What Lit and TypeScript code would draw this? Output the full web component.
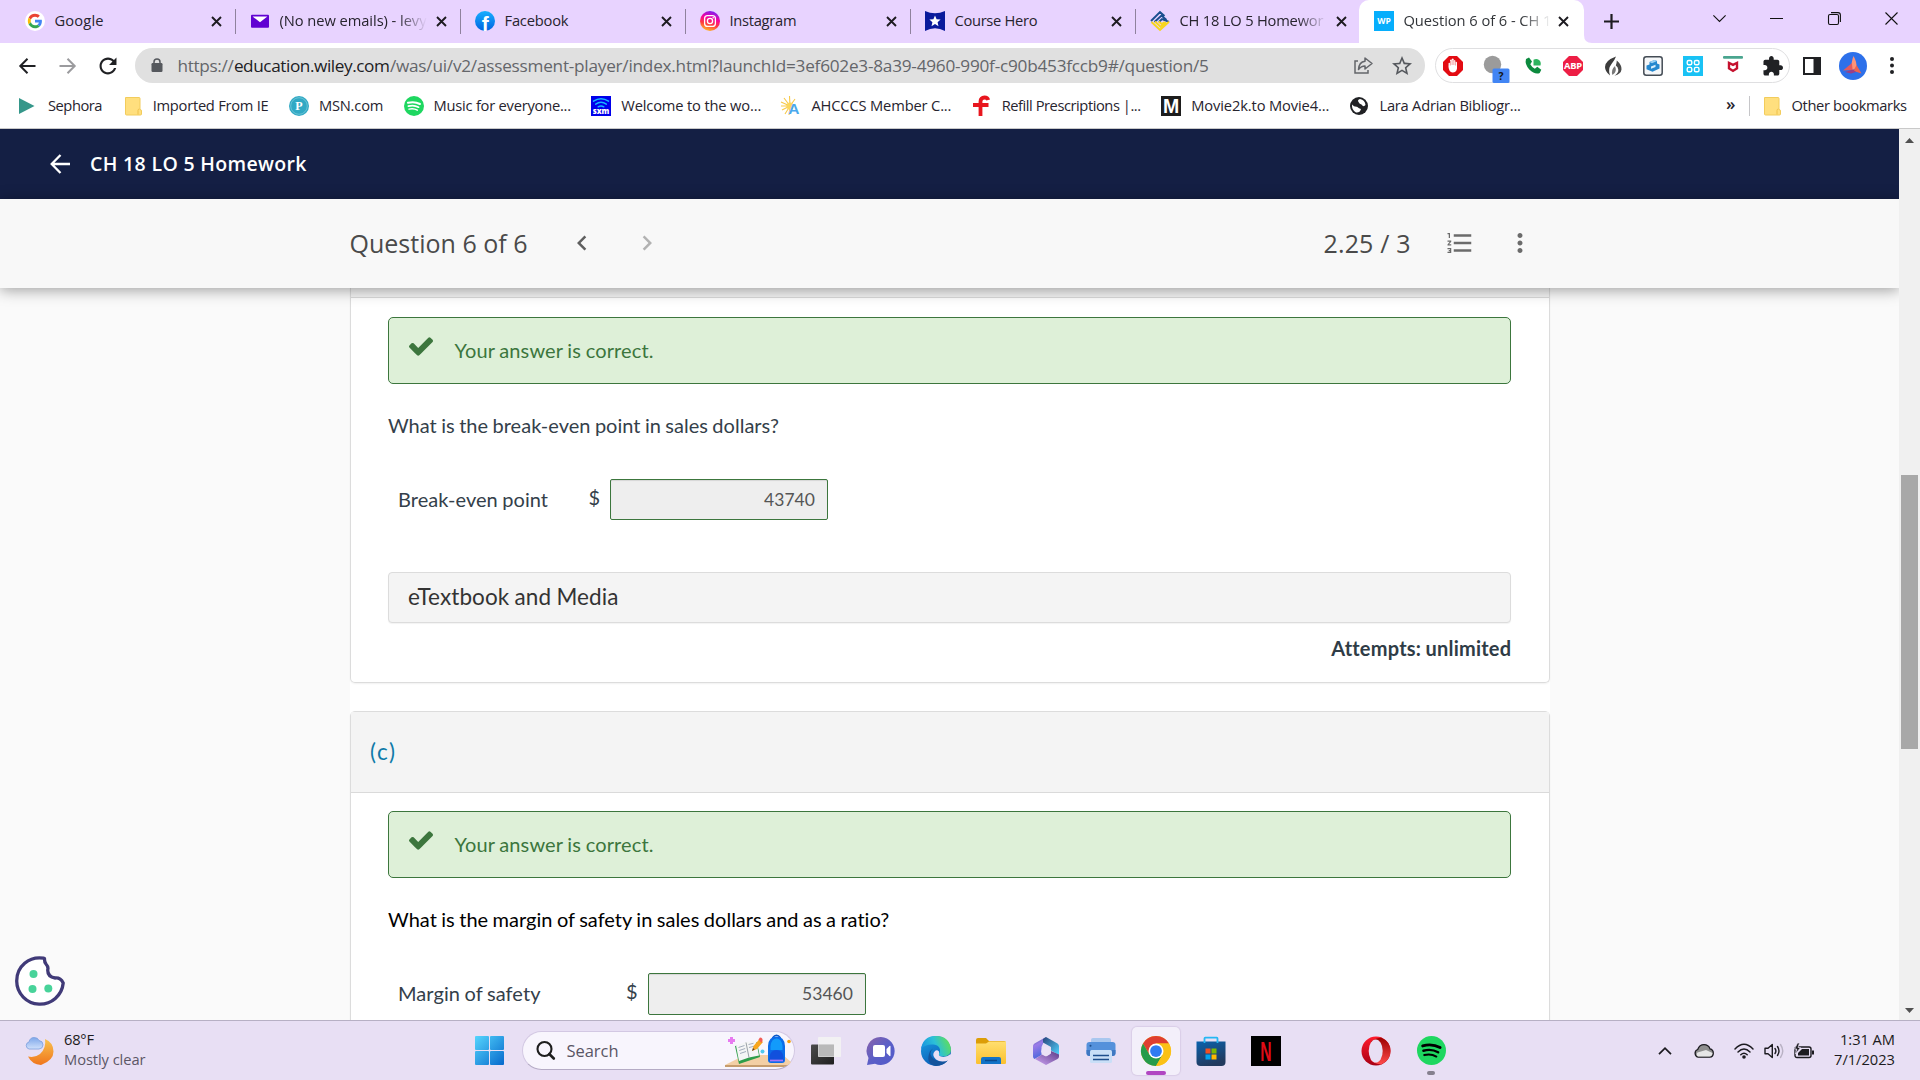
import { LitElement, html, css, svg } from "lit";
import { customElement, property } from "lit/decorators.js";

/* Text run that spreads its letters over a given advance width. */
@customElement("fit-text")
class FitText extends LitElement {
  @property({ type: Number }) w = 0;
  static styles = css`
    :host { display: inline-block; white-space: pre; flex: none; }
  `;
  firstUpdated() {
    const n = (this.textContent || "").length;
    const natural = this.getBoundingClientRect().width;
    if (this.w && n > 1) {
      const ls = (this.w - natural) / (n - 1);
      this.style.letterSpacing = ls.toFixed(3) + "px";
      this.style.marginRight = (-ls).toFixed(3) + "px";
    }
  }
  render() { return html`<slot></slot>`; }
}

const ic = (w: number, h: number, vb: string, body: unknown) =>
  html`<svg class="ic" width=${w} height=${h} viewBox=${vb}>${body}</svg>`;
const fit = (t: string, w: number) => html`<fit-text w=${w}>${t}</fit-text>`;

const google = ic(20, 20, "0 0 20 20", svg`<circle cx="10" cy="10" r="10" fill="#fff"/>
  <g transform="translate(2.8 2.8) scale(.3)">
  <path fill="#EA4335" d="M24 9.5c3.54 0 6.71 1.22 9.21 3.6l6.85-6.85C35.9 2.38 30.47 0 24 0 14.62 0 6.51 5.38 2.56 13.22l7.98 6.19C12.43 13.72 17.74 9.5 24 9.5z"/>
  <path fill="#4285F4" d="M46.98 24.55c0-1.57-.15-3.09-.38-4.55H24v9.02h12.94c-.58 2.96-2.26 5.48-4.78 7.18l7.73 6c4.51-4.18 7.09-10.36 7.09-17.65z"/>
  <path fill="#FBBC05" d="M10.53 28.59c-.48-1.45-.76-2.99-.76-4.59s.27-3.14.76-4.59l-7.98-6.19C.92 16.46 0 20.12 0 24s.92 7.54 2.56 10.78l7.97-6.19z"/>
  <path fill="#34A853" d="M24 48c6.48 0 11.93-2.13 15.89-5.81l-7.73-6c-2.15 1.45-4.92 2.3-8.16 2.3-6.26 0-11.57-4.22-13.47-9.91l-7.98 6.19C6.51 42.62 14.62 48 24 48z"/></g>`);
const mail = ic(20, 20, "0 0 20 20", svg`<rect x="1" y="3.7" width="18" height="13" rx="1" fill="#6001d2"/><path d="M2.6 5.5l7.4 5.8 7.4-5.8z" fill="#fff"/>`);
const facebook = ic(20, 20, "0 0 20 20", svg`<defs><linearGradient id="fb" x1="0" y1="0" x2="0" y2="1"><stop offset="0" stop-color="#19afff"/><stop offset="1" stop-color="#0062e0"/></linearGradient></defs>
  <circle cx="10" cy="10" r="10" fill="url(#fb)"/><text x="6.7" y="19.6" font-family="Liberation Sans" font-weight="700" font-size="21" fill="#fff">f</text>`);
const instagram = ic(20, 20, "0 0 20 20", svg`<defs><linearGradient id="ig" x1=".3" y1="1" x2=".6" y2="0"><stop offset="0" stop-color="#ffc229"/><stop offset=".35" stop-color="#ff3a3e"/><stop offset=".65" stop-color="#f600a0"/><stop offset="1" stop-color="#7b21f5"/></linearGradient></defs>
  <circle cx="10" cy="10" r="10" fill="url(#ig)"/><g fill="none" stroke="#fff" stroke-width="1.3"><rect x="4.6" y="4.6" width="10.8" height="10.8" rx="3"/><circle cx="10" cy="10" r="2.6"/></g><circle cx="13.2" cy="6.8" r=".8" fill="#fff"/>`);
const courseHero = ic(20, 20, "0 0 20 20", svg`<path d="M0 0q5 2.300 10 2.300T20 0v20q-5-2.800-10-2.800T0 20z" fill="#0a1a9c"/>
  <path d="M10 4.600l1.600 3.700 4 .3-3 2.700.9 3.900-3.500-2.100-3.500 2.100.9-3.900-3-2.700 4-.3z" fill="#fff"/>`);
const wileyTab = ic(20, 20, "0 0 20 20", svg`<g fill="none" stroke-width="1.900"><path d="M1 10l9-9 4.500 4M4.500 11L11.500 4.500l5 4.500M9 11l3-3 7 2.800" stroke="#1b4f8f"/><path d="M1.500 11l8.500 8 9-8.300M5 10.500l5.500 5.300 5.500-4.500M8.700 10.500l3 2.500 3-2" stroke="#f7d51d"/></g>`);
const wpTab = ic(20, 20, "0 0 20 20", svg`<rect width="20" height="20" fill="#06aefc"/><text x="10" y="13" text-anchor="middle" font-family="Open Sans" font-weight="700" font-size="8.500" fill="#fff">WP</text>`);

const spotify = (s: number, ink: string) => ic(s, s, "0 0 24 24", svg`<circle cx="12" cy="12" r="12" fill="#1ed760"/><g fill="none" stroke=${ink} stroke-linecap="round"><path d="M4.700 8.200q7.800-2.200 14.400 1.400" stroke-width="2.400"/><path d="M5.300 12.200q6.600-1.900 12.200 1.300" stroke-width="2"/><path d="M6 15.800q5.500-1.400 10 1.200" stroke-width="1.700"/></g>`);

const folderBm = ic(20, 20, "0 0 20 20", svg`<path d="M2.500 1.500h13.500q1 0 1 1v11q1.500 0 1.500 1.500v3q0 1-1 1H3.500q-1 0-1-1z" fill="#ffdf7e" stroke="#f2cc5c"/><path d="M15 18.500v-4q0-1.500 1.500-1.500" fill="none" stroke="#eec04a"/>`);

const TABS = [
  { icon: google, t: "Google", w: 49 },
  { icon: mail, t: "(No new emails) - levy", w: 147, fade: true },
  { icon: facebook, t: "Facebook", w: 64 },
  { icon: instagram, t: "Instagram", w: 67 },
  { icon: courseHero, t: "Course Hero", w: 83 },
  { icon: wileyTab, t: "CH 18 LO 5 Homewor", w: 144, fade: true },
  { icon: wpTab, t: "Question 6 of 6 - CH 1", w: 148, fade: true, active: true },
];

const BOOKMARKS = [
  { icon: ic(20, 20, "0 0 20 20", svg`<path d="M1 2l15.500 8L1 18z" fill="#35978a"/>`), t: "Sephora", w: 54.500 },
  { icon: folderBm, t: "Imported From IE", w: 116 },
  { icon: ic(20, 20, "0 0 20 20", svg`<circle cx="10" cy="10" r="10" fill="#31a9c4"/><circle cx="10" cy="10" r="8.300" fill="none" stroke="#8ed3e0" stroke-width=".6"/><text x="10" y="14" text-anchor="middle" font-family="Liberation Serif" font-weight="700" font-size="12" fill="#fff">P</text>`), t: "MSN.com", w: 64.500 },
  { icon: spotify(20, "#fff"), t: "Music for everyone...", w: 137.500 },
  { icon: ic(20, 20, "0 0 20 20", svg`<rect width="20" height="20" fill="#0000eb"/><g fill="none" stroke="#18b8ff" stroke-width="1.500" stroke-linecap="round"><path d="M2.500 5.200q7.500-5 15 0"/><path d="M4.700 8.100q5.300-3.500 10.600 0"/><path d="M7.200 10.800q2.800-1.800 5.600 0"/></g><text x="10" y="18" text-anchor="middle" font-family="Open Sans" font-weight="800" font-size="7.800" fill="#fff">sxm</text>`), t: "Welcome to the wo...", w: 140 },
  { icon: ic(20, 20, "0 0 20 20", svg`<g stroke="#f7c948" stroke-width="1.100"><path d="M9 10L0 6M9 10L3 2M9 10L8.500 0M9 10l5-7M9 10H0M9 10l-8 4M9 10l-5 8M9 10l-1 9"/></g><circle cx="9" cy="10" r="3.500" fill="#fbd65c"/><text x="12.800" y="18" text-anchor="middle" font-family="Liberation Sans" font-weight="700" font-size="15.500" fill="#4aa9ee">A</text>`), t: "AHCCCS Member C...", w: 140 },
  { icon: ic(20, 20, "0 0 20 20", svg`<path d="M8.500 20V5.500Q8.500 1.500 12.500 1.500q3 0 3.700 2.500M1 9h15.500" fill="none" stroke="#e8161e" stroke-width="3.800"/>`), t: "Refill Prescriptions |...", w: 139.500 },
  { icon: ic(20, 20, "0 0 20 20", svg`<rect width="20" height="20" fill="#1d1d1d"/><text x="10" y="17" text-anchor="middle" font-family="Liberation Sans" font-weight="700" font-size="19.500" fill="#fff">M</text>`), t: "Movie2k.to Movie4...", w: 138 },
  { icon: ic(20, 20, "0 0 20 20", svg`<circle cx="10" cy="10" r="9" fill="#202124"/><path d="M11 3q5 1 5.500 6-2 2.500-4-.500-2-.500-3-2.500Q8 4 11 3zM3 8.500q2 2.500 5 2.200 2 2 4 2.300-1 4-5 3.500Q2.500 14 3 8.500z" fill="#fff"/>`), t: "Lara Adrian Bibliogr...", w: 141.500 },
];

const EXTENSIONS = [
  ic(20, 20, "0 0 20 20", svg`<path d="M6 0h8l6 6v8l-6 6H6l-6-6V6z" fill="#e30b12"/><path d="M5.500 11l.1-4q1.200-.8 1.500.4V4q1.200-.9 1.700.2V3q1.300-1 1.900.2v1.200q1.200-.7 1.700.3V6q1.300-.600 1.600.400v6.100q-.500 4-4.500 4Q6 16 5.500 11z" fill="#fff"/><path d="M7.300 5v4.500M9.100 4v5M10.900 4v5M12.600 5.500V9.500" stroke="#e30b12" stroke-width=".4"/>`),
  ic(34, 35, "0 0 34 35", svg`<circle cx="16.500" cy="16.500" r="8.700" fill="#9b9b9b"/><rect x="16.500" y="20.500" width="17" height="14.500" rx="1.500" fill="#4285f4"/><text x="25" y="32" text-anchor="middle" font-family="Open Sans" font-weight="700" font-size="10.500" fill="#151515">?</text>`),
  ic(20, 20, "0 0 20 20", svg`<path d="M3 3l3-1.500 3 4L7.300 8.200q1.500 3 4.500 4.500l2.500-2 4 3-1.600 3.300Q12 19 6.300 13.500 1.500 8 3 3z" fill="#0c8a3e"/><path d="M10.500 9.500V3.800q3-1.800 5.500.2 2.500 2 1.500 5.500z" fill="#2eb45f"/>`),
  ic(20, 20, "0 0 20 20", svg`<path d="M6 0h8l6 6v8l-6 6H6l-6-6V6z" fill="#ed1e45"/><text x="10" y="13.300" text-anchor="middle" font-family="Open Sans" font-weight="700" font-size="9.300" textLength="18" fill="#fff">ABP</text>`),
  ic(20, 20, "0 0 20 20", svg`<path d="M13 .5Q2 4.500 2 11q0 4.500 5 8.500Q4.500 13 8.500 8 11.500 4.500 13 .5z" fill="#3c3c3c"/><path d="M13.800 4.500Q19 9 18.500 13.500 18 18 11.500 19.800q4.300-2.800 3.800-6-.3-3-2.500-4.300.9-2 1-5z" fill="#4a4a4a"/><path d="M12 10q-4.500 4-2.500 9Q14.500 16 12 10z" fill="#777"/>`),
  ic(20, 20, "0 0 20 20", svg`<rect x=".8" y=".8" width="18.400" height="18.400" rx="2.500" fill="#f5f7f9" stroke="#444c55" stroke-width="1.500"/><path d="M3.500 9.500l3-1V6l5-2 2.500 1v2.500l2.500 1v4l-7 3.300-6-2.500z" fill="#2488cf"/><path d="M6.500 6l5-2 2.500 1-5 2.200z" fill="#9bd2f5"/><path d="M8 10.500l4.500-1.800V11L8 12.800z" fill="#d9effc"/>`),
  ic(20, 20, "0 0 20 20", svg`<rect width="20" height="20" fill="#19c2f5"/><g fill="none" stroke="#fff" stroke-width="1.400"><rect x="4.200" y="4.500" width="4.600" height="4.300" rx="1.500"/><rect x="11.400" y="4.500" width="4.600" height="4.300" rx="1.500"/><rect x="4.200" y="11.400" width="4.600" height="4.300" rx="1.500"/><rect x="11.400" y="11.400" width="4.600" height="4.300" rx="1.500"/></g>`),
  ic(20, 20, "0 0 20 20", svg`<rect width="20" height="2.800" rx="1" fill="#4aa58f"/><path d="M4.800 5L10 7.500 15.200 5v8L10 16.200 4.800 13z" fill="#c5112e"/><path d="M7.200 8.800L10 10.200l2.800-1.400v2.900L10 13.400l-2.800-1.700z" fill="#fff"/>`),
  ic(20, 20, "1.500 1 21.500 21.500", svg`<path fill="#202124" d="M20.500 11H19V7c0-1.100-.9-2-2-2h-4V3.500C13 2.120 11.880 1 10.500 1S8 2.120 8 3.500V5H4c-1.100 0-1.990.9-1.990 2v3.800H3.500c1.490 0 2.700 1.210 2.700 2.700s-1.210 2.700-2.700 2.700H2V20c0 1.100.9 2 2 2h3.800v-1.500c0-1.490 1.210-2.700 2.700-2.700 1.490 0 2.700 1.210 2.700 2.700V22H17c1.100 0 2-.9 2-2v-4h1.500c1.380 0 2.500-1.120 2.500-2.500S21.880 11 20.500 11z"/>`),
];

const winLogo = ic(29, 29, "0 0 29 29", svg`<defs><linearGradient id="wl" gradientUnits="userSpaceOnUse" x1="0" y1="0" x2="29" y2="29"><stop offset="0" stop-color="#55d5fd"/><stop offset="1" stop-color="#0669cc"/></linearGradient></defs><g fill="url(#wl)"><rect width="14" height="14" rx="1"/><rect x="15" width="14" height="14" rx="1"/><rect y="15" width="14" height="14" rx="1"/><rect x="15" y="15" width="14" height="14" rx="1"/></g>`);

const searchArt = ic(66, 34, "0 0 66 34", svg`<path d="M0 31L20 21h38l8 7q-1 2-3 3z" fill="#f3cfa5"/><path d="M0 31h63l-4 2H0z" fill="#c69c6d"/>
  <path d="M10 12l22-4 3 15-21 7z" fill="#2e9e4a"/><path d="M11 11.500l10-3.500 10-1.500 3 15L24 23.500 14 27z" fill="#f5f5f5"/><path d="M21 8.500l3 15" stroke="#9aa0a6"/><path d="M13.500 13.500l6-2M14.200 16.500l6-2M15 19.500l6-2M23.500 10.500l5-1.200M24 13.500l5-1.200" stroke="#9aa4b5" stroke-width=".9"/>
  <path d="M27 17l1.500-5 6-7 3.500 3-6 7z" fill="#f8a61c"/><path d="M33.500 5.500l1.500-2q3 .300 2.500 3L36.500 9z" fill="#f25c54"/><path d="M27 17l1-3 1.700 1.400z" fill="#5b4636"/>
  <path d="M47.500 4q4-5.500 8 0" fill="none" stroke="#0b57c7" stroke-width="1.700"/><path d="M43 12q.5-9.500 8.500-9.500T60 12v14q0 3-3 3H46q-3 0-3-3z" fill="#0b6be8"/><path d="M45.500 12q1-7.500 6-7.500t6 7.500v4h-12z" fill="#129bfb"/><path d="M44.500 23q1-7 7-7t7 7v4h-14z" fill="#1150dd"/><path d="M45 26.500h13" stroke="#a775f7" stroke-width="1.700"/>
  <path d="M6.500 3v7M3 6.500h7" stroke="#e77af0" stroke-width="3"/><circle cx="37.500" cy="17.500" r="2" fill="#4fc8ee"/><circle cx="64" cy="7.500" r="1.800" fill="#f59f0a"/>`);

const DOCK: { icon: unknown; cls?: string; mark?: string }[] = [
  { icon: ic(30, 30, "0 0 30 30", svg`<defs><linearGradient id="tv" x1="0" y1="0" x2="1" y2="1"><stop offset="0" stop-color="#4b4b4b"/><stop offset="1" stop-color="#1f1f1f"/></linearGradient></defs><rect x="0" y="8.500" width="23" height="20" rx="1" fill="url(#tv)"/><rect x="7" y="1" width="23" height="20" rx="1" fill="#f3f3f3" fill-opacity=".9"/><rect x="7.500" y="8.500" width="15.500" height="12" fill="#b9b9b9"/>`) },
  { icon: ic(30, 30, "0 0 30 30", svg`<defs><linearGradient id="ch" x1="0" y1="0" x2="1" y2="1"><stop offset="0" stop-color="#8b62a8"/><stop offset=".5" stop-color="#5b5fc7"/><stop offset="1" stop-color="#5059c9"/></linearGradient></defs><path d="M15 1a14 14 0 1 1-6 26.800L1 29l1.500-7A14 14 0 0 1 15 1z" fill="url(#ch)"/><rect x="7" y="9" width="12" height="12" rx="2" fill="#fff"/><path d="M20.500 13l3-3q1-.5 1 .5v9q0 1-1 .500l-3-3z" fill="#fff"/>`) },
  { icon: ic(30, 30, "0 0 30 30", svg`<defs><linearGradient id="eg" x1="0" y1=".6" x2="1" y2=".3"><stop offset="0" stop-color="#1790e0"/><stop offset=".5" stop-color="#2cc0d8"/><stop offset="1" stop-color="#62e052"/></linearGradient><linearGradient id="eb" x1="0" y1="0" x2=".5" y2="1"><stop offset="0" stop-color="#1ba3e3"/><stop offset="1" stop-color="#0b5cb8"/></linearGradient></defs><circle cx="15" cy="15" r="15" fill="url(#eb)"/><path d="M0 13Q2 0 15 0t15 13q0 7-7 7.500-5 0-5.500-2.500 2-2 1.500-4.500-1-4.500-6.500-5Q4 8 0 13z" fill="url(#eg)"/><path d="M12 12.500q-5 5 0 10 6 5 15.500 1Q23 30 15 30 5 28 8 18q1-4 4-5.500z" fill="#14549c"/><path d="M18 17.500q-1 3 4.500 3.500 4 0 7-3l1.500 5-3 1.200q-8 3-13-.7-5-4.500-1-8.500 2-1.500 4 .5z" fill="#e8dff4"/>`) },
  { icon: ic(30, 28, "0 0 30 28", svg`<defs><linearGradient id="fo" x1="0" y1="0" x2="0" y2="1"><stop offset="0" stop-color="#ffdf70"/><stop offset="1" stop-color="#fbc02d"/></linearGradient></defs><path d="M0 3q0-2 2-2h8l3 3h15q2 0 2 2v6H0z" fill="#dc9d07"/><path d="M0 6.500h10l3-2h17V26q0 1-1.500 1h-27Q0 27 0 26z" fill="url(#fo)"/><path d="M5 27v-5q0-2 2-2h16q2 0 2 2v5z" fill="#1273c7"/><path d="M9 23.500h12" stroke="#0b4a8c" stroke-width="1.500"/>`) },
  { icon: ic(28, 28, "0 0 28 28", svg`<defs><linearGradient id="m1" x1="0" y1="0" x2=".3" y2="1"><stop offset="0" stop-color="#35599c"/><stop offset=".4" stop-color="#9b7be8"/><stop offset="1" stop-color="#4a68dc"/></linearGradient><linearGradient id="m2" x1="0" y1="0" x2="1" y2="1"><stop offset="0" stop-color="#29447c"/><stop offset="1" stop-color="#4fd4ff"/></linearGradient><linearGradient id="m3" x1="0" y1="1" x2="1" y2="0"><stop offset="0" stop-color="#cfa5f5"/><stop offset="1" stop-color="#5b3a86"/></linearGradient></defs><path d="M14 0L2.500 6.500Q1 7.500 1 9v10.500q0 1.500 1.500 2.500l7-4V10z" fill="url(#m1)"/><path d="M14 0l11.500 6.500Q27 7.500 27 9v9l-8-4.500V10L11 5.500V2z" fill="url(#m2)"/><path d="M27 17.500v2q0 1.500-1.500 2.500L14 28 3 22l7-4.500 4 2 5-3V14z" fill="url(#m3)"/><circle cx="14" cy="14.200" r="4.700" fill="#ebe2f6"/>`) },
  { icon: ic(30, 26, "0 0 30 26", svg`<path d="M5 2q0-2 2-2h16q2 0 2 2v6H5z" fill="#a9c7ef"/><path d="M.5 7q0-3 3-3h23q3 0 3 3v8q0 3-3 3h-23q-3 0-3-3z" fill="#5591db"/><path d="M.5 12v3q0 3 3 3h23q3 0 3-3v-3z" fill="#3f78c2"/><rect x="4" y="12" width="22" height="13" rx="1.500" fill="#c9dff7"/><path d="M7 17.500h16M7 21.500h16" stroke="#1e4e8c" stroke-width="1.500"/><circle cx="4.500" cy="7.800" r="1" fill="#1e4e8c"/>`) },
  { cls: "on", mark: "bar", icon: ic(30, 30, "0 0 48 48", svg`<circle cx="24" cy="24" r="24" fill="#fbc116"/><path d="M24 12H44.800A24 24 0 0 0 3.200 12L13.600 30z" fill="#df3e30"/><path d="M13.600 30L3.200 12A24 24 0 0 0 24 48L34.400 30z" fill="#269b4b"/><path d="M34.400 30L24 48A24 24 0 0 0 44.800 12H24z" fill="#fbc116"/><circle cx="24" cy="24" r="12" fill="#fff"/><circle cx="24" cy="24" r="9.400" fill="#2f7bf2"/>`) },
  { icon: ic(30, 30, "0 0 30 30", svg`<defs><linearGradient id="st" x1="0" y1="0" x2=".4" y2="1"><stop offset="0" stop-color="#0a62ad"/><stop offset="1" stop-color="#223a5e"/></linearGradient></defs><path d="M.5 5.500h29V26q0 4-4 4h-21q-4 0-4-4z" fill="url(#st)"/><path d="M8.500 7V2.500q0-.800.800-.800h11.400q.800 0 .800.800V7" fill="none" stroke="#25b7f3" stroke-width="1.800"/><path d="M9.500 12.500h5v5h-5z" fill="#f25022"/><path d="M15.500 12.500h5v5h-5z" fill="#7fba00"/><path d="M9.500 18.500h5v5h-5z" fill="#00a4ef"/><path d="M15.500 18.500h5v5h-5z" fill="#ffb900"/>`) },
  { icon: ic(30, 30, "0 0 30 30", svg`<rect width="30" height="30" fill="#000"/><text transform="translate(15 25) scale(.58 1)" text-anchor="middle" font-family="Liberation Sans" font-weight="700" font-size="27" fill="#df0b16">N</text>`) },
  { icon: "" },
  { icon: ic(30, 30, "0 0 30 30", svg`<defs><linearGradient id="op" x1="0" y1="0" x2="0" y2="1"><stop offset="0" stop-color="#ff1b2d"/><stop offset="1" stop-color="#a70014"/></linearGradient><linearGradient id="op2" x1="0" y1="0" x2="0" y2="1"><stop offset="0" stop-color="#9c0000"/><stop offset="1" stop-color="#ff4b4b"/></linearGradient></defs><ellipse cx="15" cy="15" rx="14.500" ry="14.500" fill="url(#op)"/><path d="M10 5.500Q15 2 20 1.600q9.500 4 9.500 13.400T20 28.400Q14 28 10 24.500z" fill="url(#op2)"/><ellipse cx="14.700" cy="15" rx="7" ry="11.500" fill="#e8dff4"/>`) },
  { mark: "dot", icon: spotify(29, "#000") },
];

const check = ic(24, 19, "121 334 1550 1188", svg`<path fill="#3c763d" d="M1671 566q0 40-28 68l-724 724-136 136q-28 28-68 28t-68-28l-136-136-362-362q-28-28-28-68t28-68l136-136q28-28 68-28t68 28l294 295 656-657q28-28 68-28t68 28l136 136q28 28 28 68z"/>`);

@customElement("app-root")
class AppRoot extends LitElement {
  static styles = css`
    :host { display: flex; flex-direction: column; width: 1920px; height: 1080px; overflow: hidden; background: #fff;
      font: 14.700px/20px "Open Sans", "Noto Sans", sans-serif; color: #27242e; }
    * { box-sizing: border-box; }
    .ic { display: block; flex: none; overflow: visible; }
    .slot { display: flex; align-items: center; justify-content: center; flex: none; }

    .tabs { display: flex; height: 43px; flex: none; background: #e8d3ff; padding-left: 11px; }
    .tab { width: 225px; height: 43px; display: flex; align-items: center; padding: 0 0 1px 14px; position: relative; flex: none; }
    .tab::after { content: ""; width: 1px; height: 25px; background: #8f829d; position: absolute; right: 0; top: 9px; }
    .tab.last::after, .tab.active::after { display: none; }
    .tab.active { background: #fff; border-radius: 10px 10px 0 0; margin-left: -2px; padding-left: 15px; }
    .tab.active .title { color: #33363a; }
    .title { width: 151px; margin-left: 10px; padding-bottom: 2px; overflow: hidden; white-space: nowrap; flex: none; }
    .title fit-text { margin-left: -.5px; }
    .active .title { width: 149px; }
    .title.fade { -webkit-mask-image: linear-gradient(90deg, #000 118px, transparent 147px); mask-image: linear-gradient(90deg, #000 118px, transparent 147px); }
    .close { width: 20px; }
    .curve { width: 8px; height: 8px; align-self: flex-end; }
    .plus { width: 38px; padding-bottom: 1px; }
    .win { display: flex; margin-left: auto; }
    .win .slot { width: 57.300px; height: 36px; }

    .bar { height: 45px; display: flex; align-items: center; padding-left: 7px; flex: none; }
    .nav { width: 40.300px; }
    .omni { width: 1290px; height: 35px; border-radius: 18px; background: #e0e0e0; margin-left: 7px; display: flex; align-items: center; padding: 0 3px 0 16px; font-size: 17.200px; color: #64666a; }
    .url { flex: 1; display: flex; margin-left: 14.500px; }
    .host { color: #202124; }
    .omni .slot { width: 39px; }
    .exts { width: 355px; height: 35px; border: 1px solid #dfdfe1; border-radius: 18px; margin-left: 10px; display: flex; gap: 6px; }
    .exts .slot { width: 34px; }
    .side { width: 42px; margin-left: 1px; }
    .avatar { width: 40px; }
    .menu { width: 38px; }

    .marks { height: 40px; display: flex; align-items: center; gap: 20.200px; padding: 0 13px 4px 18px; flex: none; }
    .bm { display: flex; align-items: center; gap: 10px; }
    .bm fit-text { padding-bottom: 2px; }
    .more { margin-left: auto; display: flex; align-items: center; }
    .rule { width: 1px; height: 20px; background: #c6c6c9; margin: 0 12px 0 13px; }
    .dbl { font-size: 17px; font-weight: 600; padding-bottom: 4px; }

    .view { height: 892px; flex: none; display: flex; border-top: 1px solid #c9c9c9; overflow: hidden; }
    .page { width: 1899px; background: #fafafa; display: flex; flex-direction: column; position: relative; overflow: hidden; }
    .head { height: 70px; flex: none; background: #141f44; color: #fff; display: flex; align-items: center; padding-left: 50px; font-size: 19.500px; font-weight: 600; gap: 20px; }
    .head fit-text { padding-bottom: 1px; }
    .sub { height: 89px; flex: none; background: #f8f8f8; box-shadow: 0 2px 14px rgba(0,0,0,.38); position: relative; display: flex; align-items: center; padding-left: 349.500px; font-size: 25px; color: #4a4a4a; }
    .sub fit-text { padding-bottom: 2px; }
    .prev { width: 30px; margin-left: 39px; margin-bottom: 2px; }
    .next { width: 30px; margin-left: 35.500px; opacity: .45; margin-bottom: 2px; }
    .score { margin-left: 661.500px; }
    .list { margin-left: 34.500px; width: 30px; margin-bottom: 2px; }
    .dots { margin-left: 30px; width: 30px; margin-bottom: 2px; }

    .col { width: 1200px; margin-left: 350px; background: #fff; flex: 1; font-family: Lato, sans-serif; font-size: 20px; line-height: 30px; color: #34404a; word-spacing: -.7px; }
    .card { border: 1px solid #dcdcdc; padding: 0; border-radius: 5px; box-shadow: 0 1px 2px rgba(0,0,0,.06); }
    .card.first { border-top: 0; border-radius: 0 0 5px 5px; padding-bottom: 19px; }
    .card.second { margin-top: 28px; height: 400px; }
    .cap { background: #f4f4f4; border-bottom: 1px solid #dadada; height: 81px; padding: 0 0 0 19px; display: flex; align-items: center; font-size: 22.500px; color: #0f7aa8; }
    .first .cap { height: 10px; }
    .body { padding: 19px 38px 0 37px; }
    .second .body { padding-top: 18px; }
    .alert { height: 67px; border: 1px solid #3c763d; border-radius: 5px; background: #def0d8; color: #3c763d; display: flex; align-items: center; padding: 0 0 2px 20px; gap: 21.500px; }
    .alert .ic { margin-bottom: 7px; }
    .ask { height: 30px; margin-top: 26px; display: flex; }
    .second .ask { color: #000; }
    .row { display: flex; align-items: center; height: 41px; margin: 39px 0 0 10px; }
    .second .row { height: 42px; }
    .label { width: 190.500px; display: flex; padding-bottom: 2px; }
    .second .label { width: 228px; }
    .cur { width: 21.500px; padding-bottom: 6px; }
    .second .cur { width: 22px; }
    .field { width: 218px; height: 100%; border: 1px solid #3c763d; border-radius: 2px; background: #eee; box-shadow: inset 0 1px 1px rgba(0,0,0,.1); font-size: 17.500px; color: #555; display: flex; align-items: center; justify-content: flex-end; padding-right: 12px; }
    .etext { height: 51px; margin-top: 52px; border: 1px solid #dcdcdc; border-radius: 4px; background: #f4f4f4; padding: 0 0 2px 19px; display: flex; align-items: center; font-size: 22.500px; color: #333; box-shadow: 0 1px 1px rgba(0,0,0,.05); }
    .att { height: 30px; margin-top: 10px; display: flex; justify-content: flex-end; font-weight: 700; color: #2f3c46; }
    .cookie { position: absolute; left: 15px; top: 827px; }

    .scroll { width: 21px; background: #f0f0f0; display: flex; flex-direction: column; align-items: center; padding: 9px 0 7px; }
    .thumb { width: 17px; height: 274px; margin-top: 332px; margin-bottom: auto; background: #a8a8a8; }

    .task { height: 60px; flex: none; background: #e8dff4; border-top: 1px solid #b7b0c4; display: flex; align-items: center; color: #1c1b20; }
    .weather { width: 462px; padding-left: 25px; display: flex; align-items: center; gap: 10px; }
    .two { display: flex; flex-direction: column; line-height: 20px; padding-bottom: 3px; }
    .two .dim { color: #5c5766; }
    .dock { width: 55px; height: 59px; }
    .tile { width: 48px; height: 48px; border-radius: 5px; position: relative; }
    .tile.on { background: #f3effa; box-shadow: 0 0 1px 1px rgba(120,90,150,.13); }
    .bar2 { position: absolute; height: 4px; border-radius: 2px; bottom: 0; left: 14px; width: 20px; background: #b146c2; }
    .bar2.dot { left: 20px; width: 8px; background: #85808e; }
    .find { width: 273px; height: 39px; margin: 0 3.500px 0 5px; border-radius: 20px; background: #f8f5fd; border: 1px solid #d3c8e3; border-bottom-color: #b5abc5; display: flex; align-items: center; padding-left: 12.500px; font-size: 16.500px; color: #5a5665; }
    .find fit-text { margin-left: 12px; }
    .art { margin-left: 106px; }
    .tray { margin-left: auto; display: flex; align-items: center; padding-right: 25px; }
    .t39 { width: 39px; } .t40 { width: 40px; } .t30 { width: 30px; margin-left: 5px; } .t29 { width: 29px; } .t31 { width: 31px; }
    .clock { width: 76px; align-items: flex-end; }
  `;

  private card(kind: string, cap: unknown, ask: unknown, label: unknown, value: unknown, tail: unknown = "") {
    return html`<section class="card ${kind}">
      <div class="cap">${cap}</div>
      <div class="body">
        <div class="alert">${check}${fit("Your answer is correct.", 199)}</div>
        <div class="ask">${ask}</div>
        <div class="row"><div class="label">${label}</div><div class="cur">$</div><div class="field">${value}</div></div>
        ${tail}
      </div>
    </section>`;
  }

  render() {
    return html`
      <div class="tabs">
        ${TABS.map((t, i) => html`<div class="tab ${t.active ? "active" : ""} ${i === 5 ? "last" : ""}">
          ${t.icon}<div class="title ${t.fade ? "fade" : ""}">${fit(t.t, t.w)}</div>
          <div class="slot close">${ic(11, 11, "0 0 11 11", svg`<path d="M1 1l9 9M10 1L1 10" stroke="#1d1b20" stroke-width="1.900"/>`)}</div>
        </div>`)}
        <svg class="curve" viewBox="0 0 8 8"><path d="M0 0q0 8 8 8H0z" fill="#fff"/></svg>
        <div class="slot plus">${ic(15, 15, "0 0 15 15", svg`<path d="M7.500 0v15M0 7.500h15" stroke="#1d1b20" stroke-width="2.200"/>`)}</div>
        <div class="win">
          <div class="slot">${ic(13, 7, "0 0 13 7", svg`<path d="M.4.400l6.100 6 6.100-6" fill="none" stroke="#111" stroke-width="1.100"/>`)}</div>
          <div class="slot">${ic(13, 2, "0 0 13 2", svg`<path d="M0 1.500h13" stroke="#111"/>`)}</div>
          <div class="slot">${ic(13, 13, "0 0 13 13", svg`<g fill="none" stroke="#111" stroke-width="1.100"><rect x=".5" y="2.500" width="10" height="10" rx="1.500"/><path d="M3 .6h7q2.400 0 2.400 2.400v7"/></g>`)}</div>
          <div class="slot">${ic(13, 13, "0 0 13 13", svg`<path d="M.5.500l12 12M12.500.500l-12 12" stroke="#111" stroke-width="1.100"/>`)}</div>
        </div>
      </div>

      <div class="bar">
        <div class="slot nav">${ic(17, 16, "0 0 17 16", svg`<path d="M16.500 8H1.500M8.500.8L1.300 8l7.200 7.200" fill="none" stroke="#202124" stroke-width="2"/>`)}</div>
        <div class="slot nav">${ic(17, 16, "0 0 17 16", svg`<path d="M.5 8h15M8.500.8L15.700 8l-7.200 7.200" fill="none" stroke="#9b9b9e" stroke-width="2"/>`)}</div>
        <div class="slot nav">${ic(18, 18, "3.500 3.500 17 17", svg`<path fill="#202124" d="M17.650 6.350C16.200 4.900 14.210 4 12 4c-4.420 0-7.990 3.580-7.990 8s3.570 8 7.990 8c3.730 0 6.840-2.550 7.730-6h-2.080c-.82 2.330-3.040 4-5.650 4-3.310 0-6-2.690-6-6s2.690-6 6-6c1.660 0 3.140.69 4.220 1.780L13 11h7V4l-2.350 2.350z"/>`)}</div>
        <div class="omni">
          ${ic(12, 15, "0 0 12 15", svg`<rect x=".5" y="5" width="11" height="9" rx="1.200" fill="#55585d"/><path d="M3 6V4a3 3 0 0 1 6 0v2" fill="none" stroke="#55585d" stroke-width="1.500"/>`)}
          <div class="url">${fit("https://", 56.500)}<span class="host">${fit("education.wiley.com", 156)}</span>${fit("/was/ui/v2/assessment-player/index.html?launchId=3ef602e3-8a39-4960-990f-c90b453fccb9#/question/5", 819)}</div>
          <div class="slot">${ic(19, 17, "0 0 19 17", svg`<g fill="none" stroke="#63656a" stroke-width="1.500"><path d="M4 4H1v12h13v-3"/><path d="M11 1l7 5.500-7 5.500V9Q7 9 4.500 12.500 5 5 11 4.300z" stroke-linejoin="round"/></g>`)}</div>
          <div class="slot">${ic(22, 22, "1 1 22 22", svg`<path fill="#55585d" d="M22 9.240l-7.190-.62L12 2 9.190 8.630 2 9.240l5.460 4.730L5.820 21 12 17.270 18.180 21l-1.630-7.030L22 9.240zM12 15.400l-3.760 2.270 1-4.280-3.320-2.880 4.380-.38L12 6.100l1.710 4.040 4.380.38-3.320 2.880 1 4.280L12 15.400z"/>`)}</div>
        </div>
        <div class="exts">${EXTENSIONS.map((e) => html`<div class="slot">${e}</div>`)}</div>
        <div class="slot side">${ic(18, 18, "0 0 18 18", svg`<rect x="1" y="1" width="16" height="16" fill="none" stroke="#202124" stroke-width="2"/><path d="M10.500 1H17v16h-6.500z" fill="#202124"/>`)}</div>
        <div class="slot avatar">${ic(28, 28, "0 0 28 28", svg`<circle cx="14" cy="14" r="14" fill="#2d70ea"/><path d="M14.500 4q3.500 6 3 12l-5 2.500Q12 10 14.500 4z" fill="#ff9478"/><path d="M4 18.500l9-7.500.5 7z" fill="#e25a5f"/><path d="M17.500 13l5 8.500-8-2.500z" fill="#ee6350"/><path d="M6 20l8-2.500 3 2.500-5 1.500z" fill="#9c3f86"/>`)}</div>
        <div class="slot menu">${ic(4, 17, "0 0 4 17", svg`<g fill="#202124"><circle cx="2" cy="2" r="2"/><circle cx="2" cy="8.500" r="2"/><circle cx="2" cy="15" r="2"/></g>`)}</div>
      </div>

      <div class="marks">
        ${BOOKMARKS.map((b) => html`<div class="bm">${b.icon}${fit(b.t, b.w)}</div>`)}
        <div class="more"><span class="dbl">»</span><div class="rule"></div><div class="bm">${folderBm}${fit("Other bookmarks", 115.500)}</div></div>
      </div>

      <div class="view">
        <div class="page">
          <div class="head">
            ${ic(20, 20, "0 0 20 20", svg`<path d="M20 10H2M10.500 1L1.700 10l8.800 9" fill="none" stroke="#fff" stroke-width="2.300"/>`)}
            ${fit("CH 18 LO 5 Homework", 216.500)}
          </div>
          <div class="sub">
            ${fit("Question 6 of 6", 178)}
            <div class="slot prev">${ic(30, 30, "0 0 24 24", svg`<path fill="#5f5f5f" d="M15.410 7.410L14 6l-6 6 6 6 1.410-1.410L10.830 12z"/>`)}</div>
            <div class="slot next">${ic(30, 30, "0 0 24 24", svg`<path fill="#5f5f5f" d="M10 6L8.590 7.410 13.170 12l-4.580 4.590L10 18l6-6z"/>`)}</div>
            <div class="score">${fit("2.25 / 3", 87)}</div>
            <div class="slot list">${ic(30, 30, "0 0 24 24", svg`<path fill="#6b6b6b" d="M2 17h2v.5H3v1h1v.5H2v1h3v-4H2v1zm1-9h1V4H2v1h1v3zm-1 3h1.800L2 13.100v.9h3v-1H3.200L5 10.900V10H2v1zm5-6v2h14V5H7zm0 14h14v-2H7v2zm0-6h14v-2H7v2z"/>`)}</div>
            <div class="slot dots">${ic(30, 30, "0 0 24 24", svg`<path fill="#6b6b6b" d="M12 8c1.100 0 2-.9 2-2s-.9-2-2-2-2 .9-2 2 .9 2 2 2zm0 2c-1.100 0-2 .9-2 2s.9 2 2 2 2-.9 2-2-.9-2-2-2zm0 6c-1.100 0-2 .9-2 2s.9 2 2 2 2-.9 2-2-.9-2-2-2z"/>`)}</div>
          </div>
          <div class="col">
            ${this.card("first", "", fit("What is the break-even point in sales dollars?", 391), fit("Break-even point", 150), fit("43740", 51),
              html`<div class="etext">${fit("eTextbook and Media", 210.500)}</div><div class="att">${fit("Attempts: unlimited", 179)}</div>`)}
            ${this.card("second", fit("(c)", 25), fit("What is the margin of safety in sales dollars and as a ratio?", 501.500), fit("Margin of safety", 142.500), fit("53460", 51))}
          </div>
          <svg class="cookie" width="50" height="50" viewBox="0 0 50 50"><path d="M28.500 2.200C14 0 1.700 10.500 1.700 25A23.300 23.300 0 0 0 48.200 27q-2.700-5.500-8-5-7.500-1-7.500-8 1-3-1.700-6-1.700-2-1.500-5.500z" fill="#fff" stroke="#403a78" stroke-width="3.300" stroke-linejoin="round"/><g fill="#48d39a"><circle cx="18.500" cy="18" r="4"/><circle cx="17.500" cy="33" r="4"/><circle cx="33.300" cy="32.500" r="4"/></g></svg>
        </div>
        <div class="scroll">
          ${ic(9, 5, "0 0 9 5", svg`<path d="M4.500 0L9 5H0z" fill="#505050"/>`)}
          <div class="thumb"></div>
          ${ic(9, 5, "0 0 9 5", svg`<path d="M0 0h9L4.500 5z" fill="#505050"/>`)}
        </div>
      </div>

      <div class="task">
        <div class="weather">
          ${ic(29, 28, "0 0 29 28", svg`<defs><linearGradient id="mo" x1="0" y1="0" x2="0" y2="1"><stop offset="0" stop-color="#f8c24f"/><stop offset="1" stop-color="#f0761c"/></linearGradient><linearGradient id="cl" x1="0" y1="0" x2="0" y2="1"><stop offset="0" stop-color="#7ea7ea"/><stop offset="1" stop-color="#cfe0fb"/></linearGradient></defs><path d="M20 2q8.500 3.500 8.500 12.500T16 28Q7 27.500 3 19.500q7 1.500 12-2.500 6.500-6 5-15z" fill="url(#mo)"/><path d="M4 12a3.600 3.600 0 0 1 0-7Q5 .5 9 .5t5 3q4 .5 4 4.300T14 12z" fill="url(#cl)" stroke="#7c9fdd" stroke-width=".8"/>`)}
          <div class="two">${fit("68°F", 30)}<span class="dim">${fit("Mostly clear", 81.500)}</span></div>
        </div>
        <div class="slot dock">${winLogo}</div>
        <div class="find">
          ${ic(19, 19, "0 0 19 19", svg`<circle cx="8.500" cy="8" r="7" fill="none" stroke="#1e1e1e" stroke-width="2.100"/><path d="M13.300 13l4.500 4.500" stroke="#1e1e1e" stroke-width="2.600" stroke-linecap="round"/>`)}
          ${fit("Search", 52)}
          <div class="art">${searchArt}</div>
        </div>
        ${DOCK.map((d) => html`<div class="slot dock"><div class="slot tile ${d.cls ?? ""}">${d.icon}${d.mark ? html`<div class="bar2 ${d.mark}"></div>` : ""}</div></div>`)}
        <div class="tray">
          <div class="slot t39">${ic(14, 8, "0 0 14 8", svg`<path d="M1 7.200L7 1.200l6 6" fill="none" stroke="#1c1b20" stroke-width="1.700"/>`)}</div>
          <div class="slot t40">${ic(20, 14, "0 0 20 14", svg`<path d="M4.500 13.200a4 4 0 0 1-.8-7.700Q5.500.700 10 .700t6 4.200q3.300.700 3.300 4.300t-3.600 4z" fill="#8f8f8f" stroke="#1c1b20" stroke-width="1.300"/><path d="M4 12.600q-2.500-1.300-.5-4L12 6l6.500 3q-.5 3.600-3 3.600z" fill="#e6e6e6"/>`)}</div>
          <div class="slot t30">${ic(20, 16, "0 0 20 16", svg`<g fill="none" stroke="#1c1b20" stroke-width="1.500" stroke-linecap="round"><path d="M1 6q9-9.500 18 0"/><path d="M4 9q6-6 12 0"/><path d="M6.800 11.800q3.200-3 6.400 0"/></g><circle cx="10" cy="14" r="1.800" fill="#1c1b20"/>`)}</div>
          <div class="slot t29">${ic(20, 16, "0 0 20 16", svg`<g fill="none" stroke="#1c1b20" stroke-width="1.400" stroke-linecap="round" stroke-linejoin="round"><path d="M1 5.300h3L8.300 1.500v13L4 10.700H1z"/><path d="M11 5.500q1.800 2.500 0 5M13.500 3.500q3 4.500 0 9"/><path d="M16.500 1.500q4.500 6.500 0 13" stroke="#b9b2c4"/></g>`)}</div>
          <div class="slot t31">${ic(20, 16, "0 0 20 16", svg`<rect x="1" y="4" width="16" height="10.500" rx="2" fill="none" stroke="#1c1b20" stroke-width="1.400"/><path d="M4 12.500h11V6H8l-4 4z" fill="#1c1b20"/><path d="M18 7.500h2v4h-2z" fill="#1c1b20"/><path d="M3.500 0L.5 6h2.300L1.500 11l5-6.500H4L5.500 0z" fill="#1c1b20" stroke="#e8dff4" stroke-width=".7"/>`)}</div>
          <div class="two clock">${fit("1:31 AM", 55)}${fit("7/1/2023", 61)}</div>
        </div>
      </div>`;
  }
}
